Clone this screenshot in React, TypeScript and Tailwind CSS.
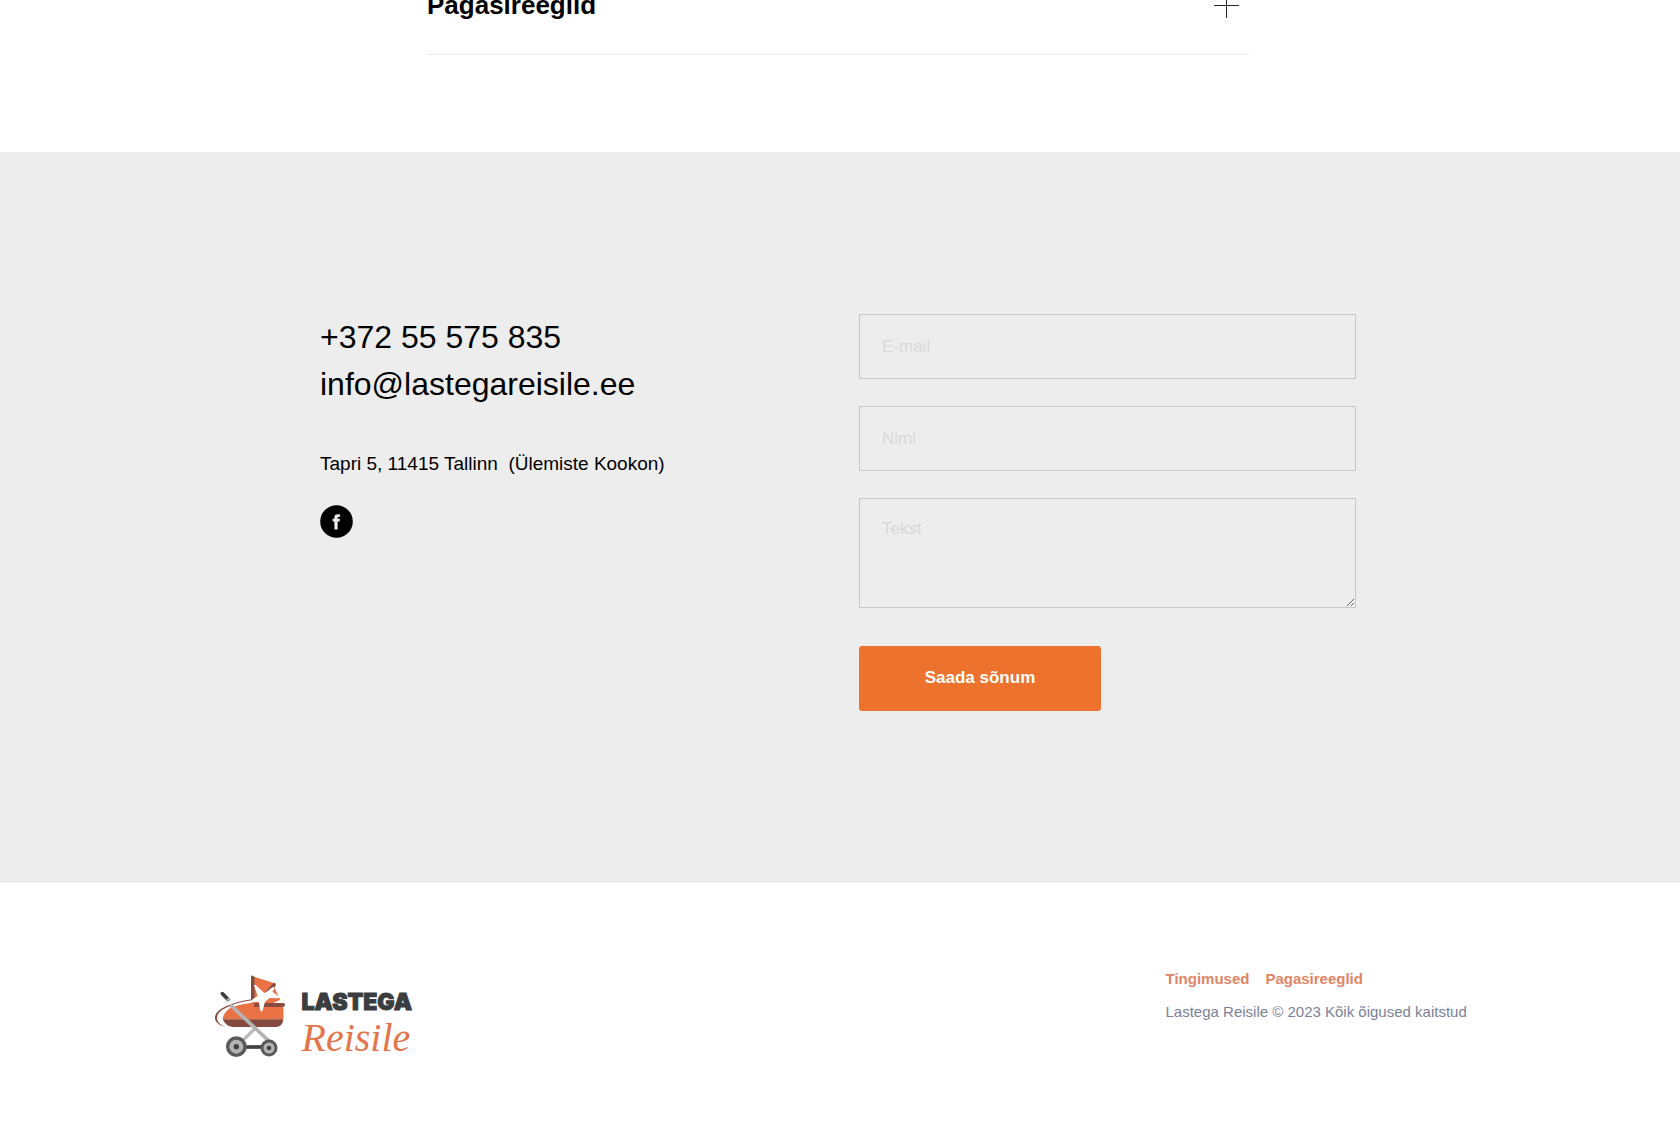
import React from 'react';

interface LinkItem {
  label: string;
  href: string;
}

const footerLinks: LinkItem[] = [
  { label: 'Tingimused', href: '#tingimused' },
  { label: 'Pagasireeglid', href: '#pagasireeglid' },
];

const fieldClass =
  'block w-full border border-[#c9c9c9] bg-transparent px-[22px] text-[17px] leading-6 text-black placeholder:text-[#d9d9d9] placeholder:opacity-100';

const AccordionItem: React.FC<{ title: string }> = ({ title }) => (
  <button
    type="button"
    className="flex w-full items-center justify-between border-b border-[#ebebeb] py-[33px] pr-[10px] text-left"
  >
    <span className="text-[26px] leading-8 font-bold">{title}</span>
    <svg width="25" height="25" viewBox="0 0 25 25" stroke="#222222" strokeWidth="1">
      <path d="M0 12.5H25M12.5 0V25" />
    </svg>
  </button>
);

const FacebookIcon: React.FC = () => (
  <svg width="33" height="33" viewBox="0 0 33 33">
    <circle cx="16.5" cy="16.5" r="16.3" fill="#000000" />
    <path
      d="M14.4 24.6V16.6H12.6V13.7H14.4V12.6C14.4 10.2 15.5 9.2 17.8 9.2H19.9V12H18.6C17.8 12 17.6 12.3 17.6 12.9V13.7H19.9L19.6 16.6H17.6V24.6Z"
      fill="#ededed"
    />
  </svg>
);

const StrollerIcon: React.FC = () => (
  <svg width="73" height="86" viewBox="24 24 219 258">
    {/* hood */}
    <path d="M142 34L214 56L207 66L226 104L200 116H142Z" fill="#ea7346" />
    <path d="M206 54Q213 54 212 62L186 92L178 84Z" fill="#8a4c3f" />
    <path d="M138 36Q138 31 144 32L149 37V118H138Z" fill="#8a4c3f" />
    {/* body */}
    <path d="M53 163Q54 142 80 126Q104 116 140 114H226Q238 114 235 163Z" fill="#ea7346" />
    <path d="M53 163H235Q233 186 212 186H84Q62 184 53 163Z" fill="#84493f" />
    <path d="M148 114H236Q241 115 240 120Q239 126 233 126H148Z" fill="#8a4c3f" />
    {/* vapour trail */}
    <path d="M160 101L100 112Q76 118 60 128L84 126Q110 117 162 110Z" fill="#ffffff" />
    <path
      d="M160 102C110 104 62 120 40 138C22 155 27 178 64 186C35 177 30 158 43 142C63 124 110 107 160 104Z"
      fill="#8a4c3f"
    />
    {/* plane */}
    <path
      d="M147 61Q150 57 155 63L178 84Q192 77 199 69Q208 62 207 72L202 80L224 96L221 100L194 99Q186 105 180 110L173 136Q171 142 166 137L161 108L145 108Q138 108 144 102L158 93Z"
      fill="#ffffff"
    />
    {/* frame */}
    <path d="M150 190L114 226" stroke="#b9b9b9" strokeWidth="10" />
    <path d="M76 120L198 234" stroke="#b3b3b3" strokeWidth="11" />
    <path d="M52 86L69 103" stroke="#404042" strokeWidth="11" strokeLinecap="round" />
    <path d="M67 101L73 107" stroke="#a8a8a8" strokeWidth="11" />
    <path d="M120 246H172" stroke="#404042" strokeWidth="11" />
    {/* wheels */}
    <circle cx="94" cy="245" r="26" fill="#b3b3b3" stroke="#59595b" strokeWidth="10" />
    <circle cx="94" cy="245" r="8" fill="#404042" />
    <circle cx="192" cy="249" r="21" fill="#b3b3b3" stroke="#59595b" strokeWidth="9" />
    <circle cx="192" cy="249" r="7" fill="#404042" />
  </svg>
);

const Logo: React.FC = () => (
  <a href="#top" className="flex items-start gap-4">
    <StrollerIcon />
    <span className="flex flex-col gap-1 pt-[15px]">
      <span className="font-['Inter',sans-serif] text-[23px] leading-7 font-black text-[#3b3c3e] [-webkit-text-stroke:1px_#3b3c3e] [stroke-linejoin:round]">
        LASTEGA
      </span>
      <span className="font-['Liberation_Serif',serif] text-[40px] leading-9 text-[#e2754c] italic">
        Reisile
      </span>
    </span>
  </a>
);

const ContactForm: React.FC = () => (
  <form className="w-[497px]" onSubmit={(e) => e.preventDefault()}>
    <div className="flex flex-col gap-[27px]">
      <input type="email" aria-label="E-mail" placeholder="E-mail" className={`${fieldClass} h-[65px]`} />
      <input type="text" aria-label="Nimi" placeholder="Nimi" className={`${fieldClass} h-[65px]`} />
      <textarea
        aria-label="Tekst"
        placeholder="Tekst"
        className={`${fieldClass} h-[110px] resize py-[18px]`}
      />
    </div>
    <button
      type="submit"
      className="mt-[38px] h-[65px] w-[242px] rounded-[3px] bg-[#ed722e] pb-[2px] text-[17px] font-bold text-white"
    >
      Saada sõnum
    </button>
  </form>
);

const App: React.FC = () => {
  return (
    <div className="flow-root overflow-hidden bg-white font-['Liberation_Sans',Arial,sans-serif] text-black">
      <section className="-mt-11 pr-1 pb-[97px]">
        <div className="mx-auto max-w-[822px]">
          <AccordionItem title="Pagasireeglid" />
        </div>
      </section>

      <section className="bg-[#ededed] pt-[162px] pr-1 pb-[172px]">
        <div className="mx-auto flex max-w-[1036px] items-start justify-between">
          <address className="flex flex-col items-start not-italic">
            <a href="tel:+37255575835" className="text-[32px] leading-[47px]">
              +372 55 575 835
            </a>
            <a href="mailto:info@lastegareisile.ee" className="text-[32px] leading-[47px]">
              info@lastegareisile.ee
            </a>
            <p className="mt-[42px] text-[19px] leading-7 whitespace-pre">
              Tapri 5, 11415 Tallinn{'  '}(Ülemiste Kookon)
            </p>
            <a href="#facebook" aria-label="Facebook" className="mt-[27px]">
              <FacebookIcon />
            </a>
          </address>
          <ContactForm />
        </div>
      </section>

      <footer className="pt-[84px] pb-[75px] pl-[3px]">
        <div className="mx-auto flex max-w-[1258px] items-start justify-between">
          <div className="pt-[6px]">
            <Logo />
          </div>
          <div className="w-[305px] text-[15px] leading-6">
            <nav className="flex gap-4 font-bold text-[#e08566]">
              {footerLinks.map((link) => (
                <a key={link.label} href={link.href}>
                  {link.label}
                </a>
              ))}
            </nav>
            <p className="mt-[9px] text-[#7b8297]">Lastega Reisile © 2023 Kõik õigused kaitstud</p>
          </div>
        </div>
      </footer>
    </div>
  );
};

export default App;
